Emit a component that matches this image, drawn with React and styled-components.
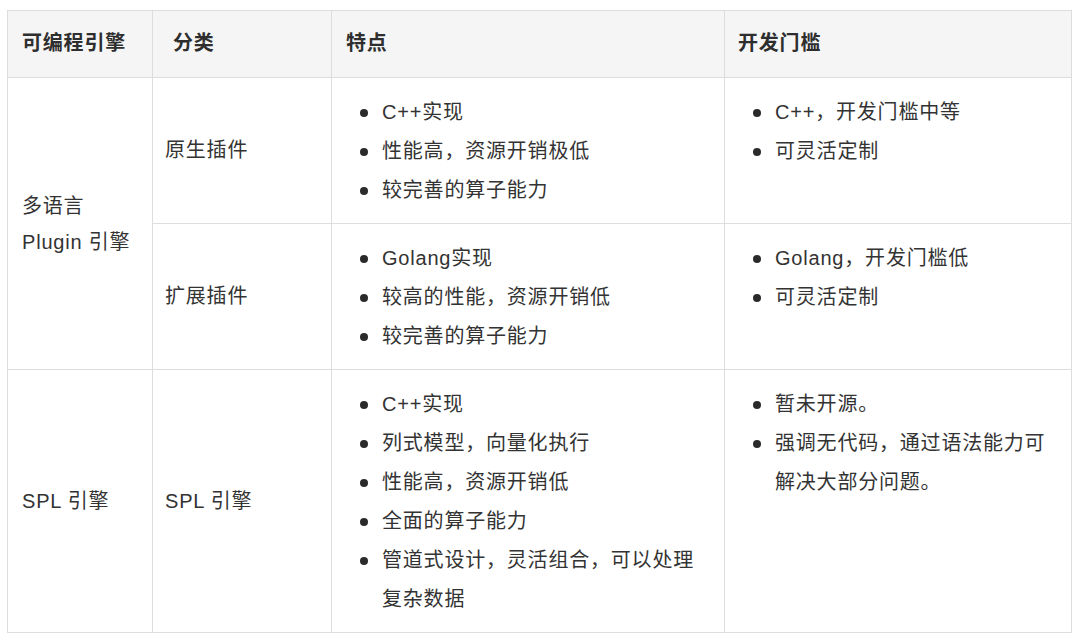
import React from "react";
import styled, { createGlobalStyle } from "styled-components";

const Global = createGlobalStyle`
  html, body { margin: 0; padding: 0; background: #ffffff; }
  body {
    font-family: "Liberation Sans", "Noto Sans CJK SC", sans-serif;
    color: #333333;
  }
`;

const Page = styled.div`
  padding: 10px 9px 0 7px;
`;

const Table = styled.table`
  width: 1064px;
  border-collapse: collapse;
  table-layout: fixed;
  font-size: 20px;
  letter-spacing: 0.8px;
  line-height: 39px;
`;

const HeadCell = styled.th`
  background: #f5f5f5;
  border: 1px solid #dddddd;
  text-align: left;
  font-weight: 600;
  color: #2e2e2e;
  padding: 13px 0 14px ${(p) => p.$indent || 14}px;
  height: 67px;
  box-sizing: border-box;
`;

const Cell = styled.td`
  border: 1px solid #dddddd;
  padding: ${(p) => (p.$list ? "15px 14px 13px 0" : `0 12px 0 ${p.$indent || 12}px`)};
  vertical-align: ${(p) => (p.$list ? "top" : "middle")};
  line-height: ${(p) => p.$lh || 39}px;
  color: #333333;
`;

const List = styled.ul`
  list-style: none;
  margin: 0;
  padding: 0 0 0 50px;
`;

const Item = styled.li`
  position: relative;
  &::before {
    content: "";
    position: absolute;
    left: -22px;
    top: 16px;
    width: 8px;
    height: 8px;
    border-radius: 50%;
    background: #2a2a2a;
  }
`;

const columns = [145, 179, 393, 347];

const Bullets = ({ items }) => (
  <List>
    {items.map((t) => (
      <Item key={t}>{t}</Item>
    ))}
  </List>
);

export default function App() {
  return (
    <Page>
      <Global />
      <Table>
        <colgroup>
          {columns.map((w, i) => (
            <col key={i} style={{ width: w }} />
          ))}
        </colgroup>
        <thead>
          <tr>
            <HeadCell>可编程引擎</HeadCell>
            <HeadCell $indent={20}>分类</HeadCell>
            <HeadCell>特点</HeadCell>
            <HeadCell $indent={13}>开发门槛</HeadCell>
          </tr>
        </thead>
        <tbody>
          <tr>
            <Cell rowSpan={2} $lh={36} $indent={14}>
              多语言
              <br />
              Plugin 引擎
            </Cell>
            <Cell>原生插件</Cell>
            <Cell $list>
              <Bullets items={["C++实现", "性能高，资源开销极低", "较完善的算子能力"]} />
            </Cell>
            <Cell $list>
              <Bullets items={["C++，开发门槛中等", "可灵活定制"]} />
            </Cell>
          </tr>
          <tr>
            <Cell>扩展插件</Cell>
            <Cell $list>
              <Bullets items={["Golang实现", "较高的性能，资源开销低", "较完善的算子能力"]} />
            </Cell>
            <Cell $list>
              <Bullets items={["Golang，开发门槛低", "可灵活定制"]} />
            </Cell>
          </tr>
          <tr>
            <Cell $indent={14}>SPL 引擎</Cell>
            <Cell>SPL 引擎</Cell>
            <Cell $list>
              <Bullets
                items={[
                  "C++实现",
                  "列式模型，向量化执行",
                  "性能高，资源开销低",
                  "全面的算子能力",
                  "管道式设计，灵活组合，可以处理复杂数据",
                ]}
              />
            </Cell>
            <Cell $list>
              <Bullets items={["暂未开源。", "强调无代码，通过语法能力可解决大部分问题。"]} />
            </Cell>
          </tr>
        </tbody>
      </Table>
    </Page>
  );
}
